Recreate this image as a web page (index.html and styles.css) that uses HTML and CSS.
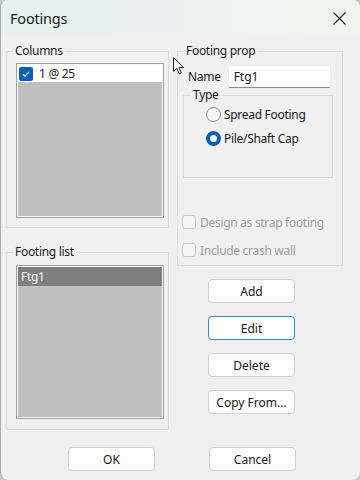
FILE: index.html
```html
<!DOCTYPE html>
<html lang="en">
<head>
  <meta charset="UTF-8">
  <title>Footings</title>
  <meta name="viewport" content="width=device-width, initial-scale=1.0">
  <link rel="stylesheet" href="styles.css">
</head>
<body>

  <div class="window">
    <!-- Title bar -->
    <div class="titlebar">
      <span class="title">Footings</span>
      <svg class="close" width="13" height="13" viewBox="0 0 13 13">
        <path d="M0.5 0.5 L12.5 12.5 M12.5 0.5 L0.5 12.5" stroke="#1b1b1b" stroke-width="1.1" fill="none"/>
      </svg>
    </div>

    <div class="content">
      <div class="col-left">
        <div class="group columns-group">
          <span class="group-title">Columns</span>
          <div class="listbox columns-list">
            <div class="list-row checked-row">
              <span class="check-on">
                <svg width="10" height="10" viewBox="0 0 10 10"><path d="M2 5.2 L4.1 7.2 L8 2.8" stroke="#fff" stroke-width="1.2" fill="none"/></svg>
              </span>
              <span>1 @ 25</span>
            </div>
          </div>
        </div>

        <div class="group list-group">
          <span class="group-title">Footing list</span>
          <div class="listbox footing-list">
            <div class="list-row selected-row">Ftg1</div>
          </div>
        </div>
      </div>

      <div class="col-right">
        <div class="group prop-group">
          <span class="group-title">Footing prop</span>
          <div class="name-row">
            <label for="name">Name</label>
            <input type="text" id="name" value="Ftg1">
          </div>

          <div class="group type-group">
            <span class="group-title">Type</span>
            <div class="radio-row">
              <span class="radio"></span>
              <span>Spread Footing</span>
            </div>
            <div class="radio-row">
              <span class="radio radio-on"></span>
              <span>Pile/Shaft Cap</span>
            </div>
          </div>

          <div class="check-row first-check">
            <span class="check-off"></span>
            <span>Design as strap footing</span>
          </div>
          <div class="check-row">
            <span class="check-off"></span>
            <span>Include crash wall</span>
          </div>
        </div>

        <div class="actions">
          <button>Add</button>
          <button class="focused">Edit</button>
          <button>Delete</button>
          <button>Copy From...</button>
        </div>
      </div>
    </div>

    <div class="footer">
      <button>OK</button>
      <button>Cancel</button>
    </div>

    <!-- mouse pointer -->
    <svg class="pointer" width="12" height="18" viewBox="0 0 12 18">
      <path d="M0.5 0.5 L0.5 14.5 L3.8 11.3 L6.2 16.8 L8.3 15.9 L6 10.6 L10.6 10.6 Z" fill="#fff" stroke="#222" stroke-width="1"/>
    </svg>
  </div>

</body>
</html>
```

FILE: styles.css
```css
body {
  margin: 0;
  background: #c9c9c9;
  font-family: 'Noto Sans', 'Open Sans', sans-serif;
  font-size: 12px;
  letter-spacing: -0.3px;
  color: #1a1a1a;
}

.window {
  position: relative;
  width: 360px;
  height: 480px;
  box-sizing: border-box;
  background: #f0f0f0;
  border-left: 1px solid #a9a9a9;
  border-radius: 8px;
  overflow: hidden;
  display: flex;
  flex-direction: column;
}

.titlebar {
  height: 36px;
  flex: none;
  display: flex;
  align-items: center;
  justify-content: space-between;
  padding: 0 14px 0 9px;
  background: linear-gradient(90deg, #e7f1f3, #eef4ef);
}

.title {
  font-size: 14.5px;
  letter-spacing: -0.2px;
  color: #1b1b1b;
}

.close {
  display: block;
}

.content {
  flex: 1;
  display: flex;
  gap: 8px;
  padding: 15px 0 0 5px;
}

.col-left {
  width: 163px;
  display: flex;
  flex-direction: column;
  gap: 24px;
}

.col-right {
  width: 166px;
}

/* group boxes */
.group {
  border: 1px solid #dadada;
  box-sizing: border-box;
}

.group-title {
  display: block;
  width: fit-content;
  margin: -9px 0 0 6px;
  padding: 0 2px;
  line-height: 16px;
  background: #f0f0f0;
}

.columns-group {
  height: 177px;
}

.list-group {
  height: 178px;
}

.listbox {
  width: 148px;
  box-sizing: border-box;
  margin-left: 9px;
  border: 1px solid #a0a0a0;
  padding: 1px;
  background: #c0c0c0;
  box-shadow: inset 0 0 0 1px #fbfbfb;
}

.columns-list {
  height: 155px;
  margin-top: 4px;
}

.footing-list {
  height: 154px;
  margin-top: 5px;
}

.list-row {
  height: 17px;
  display: flex;
  align-items: center;
}

.checked-row {
  background: #fff;
  gap: 6px;
  padding-left: 1px;
}

.check-on {
  width: 14px;
  height: 14px;
  border-radius: 2px;
  background: #005fb8;
  display: flex;
  align-items: center;
  justify-content: center;
}

.selected-row {
  height: 19px;
  background: #7f7f7f;
  color: #f2f2f2;
  padding-left: 3px;
}

/* footing prop */
.prop-group {
  height: 215px;
}

.name-row {
  display: flex;
  align-items: center;
  gap: 7px;
  margin: 6px 0 0 10px;
  height: 23px;
}

.name-row input {
  width: 103px;
  height: 23px;
  box-sizing: border-box;
  border: 1px solid #ececec;
  border-bottom-color: #8c8c8c;
  border-radius: 2px;
  background: #fff;
  font: inherit;
  color: #1a1a1a;
  padding: 0 5px;
}

.type-group {
  width: 150px;
  height: 83px;
  margin: 7px 0 0 5px;
}

.type-group .group-title {
  margin-left: 7px;
}

.radio-row {
  height: 22px;
  display: flex;
  align-items: center;
  gap: 3px;
  padding-left: 22px;
  margin-bottom: 2px;
}

.radio {
  width: 15px;
  height: 15px;
  box-sizing: border-box;
  border-radius: 50%;
  border: 1px solid #858585;
  background: #f6f6f6;
}

.radio-on {
  border: 4px solid #005fb8;
  background: #fff;
}

.check-row {
  height: 20px;
  display: flex;
  align-items: center;
  gap: 4px;
  margin: 8px 0 0 4px;
  color: #9b9b9b;
}

.first-check {
  margin-top: 34px;
}

.check-off {
  width: 14px;
  height: 14px;
  box-sizing: border-box;
  border: 1px solid #c6c6c6;
  border-radius: 3px;
  background: #f6f6f6;
}

/* buttons */
button {
  width: 87px;
  height: 24px;
  box-sizing: border-box;
  border: 1px solid #d0d0d0;
  border-radius: 4px;
  background: #fdfdfd;
  font: inherit;
  color: #1a1a1a;
  padding: 0;
}

button.focused {
  border-color: #3a84d4;
}

.actions {
  display: flex;
  flex-direction: column;
  gap: 13px;
  margin: 13px 0 0 31px;
}

.footer {
  flex: none;
  display: flex;
  gap: 54px;
  padding: 0 0 9px 67px;
}

.pointer {
  position: absolute;
  left: 172px;
  top: 57px;
}
```
